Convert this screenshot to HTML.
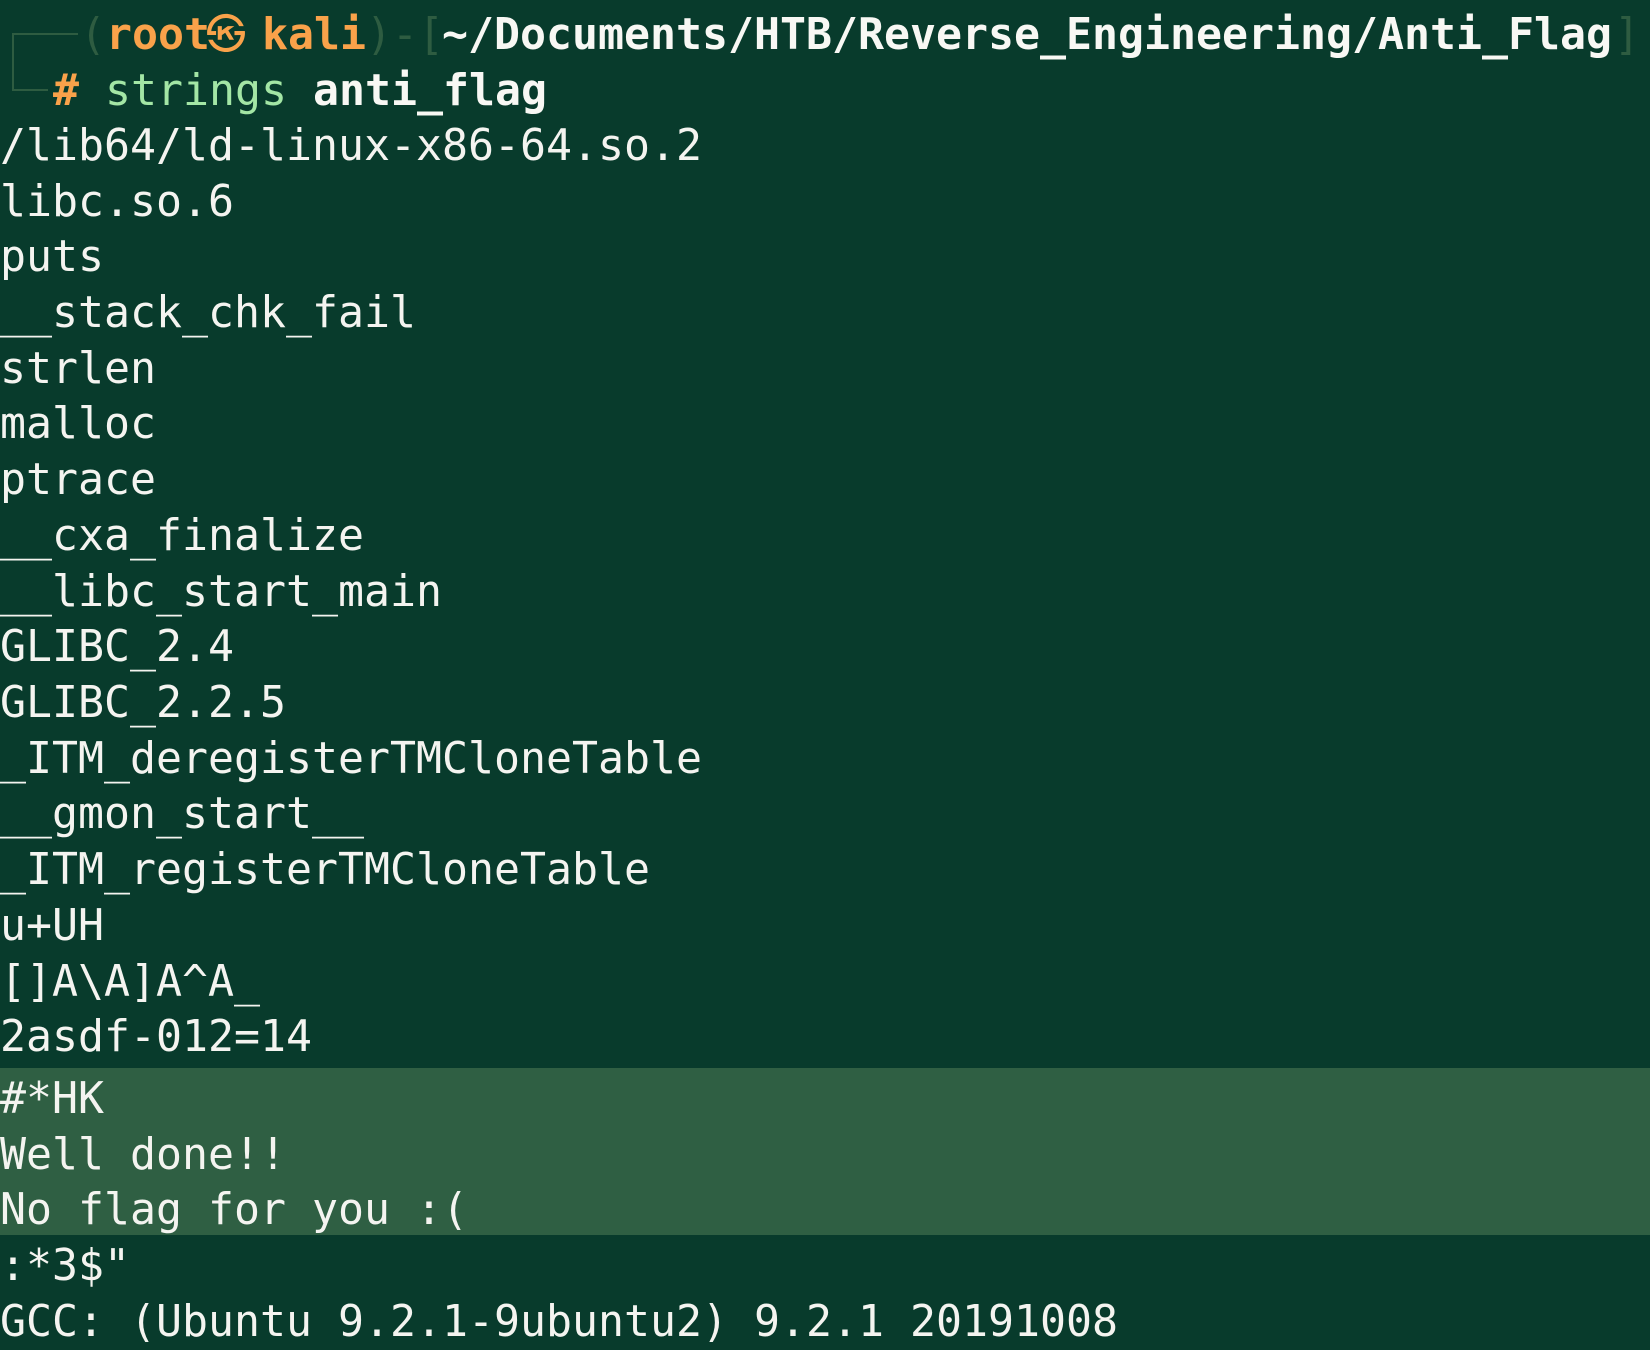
<!DOCTYPE html>
<html><head><meta charset="utf-8"><style>
html,body{margin:0;padding:0;}
body{width:1650px;height:1350px;background:#083b2c;overflow:hidden;position:relative;
font-family:"DejaVu Sans Mono","Liberation Mono",monospace;font-size:43.2px;color:#f4f4f0;}
.l{position:absolute;left:0;height:56px;line-height:56px;white-space:pre;margin-top:3px;}
.s{position:absolute;top:0;white-space:pre;}
.o{color:#f9a24a;font-weight:bold}
.d{color:#2e5c41}
.w{color:#f8f8f4;font-weight:bold}
.g{color:#a3e6a5}
.hl{position:absolute;left:0;width:1650px;top:1068px;height:167px;background:#2f5f43;}
</style></head><body>
<div class="hl"></div>
<div style="position:absolute;left:12px;top:33px;width:2px;height:58px;background:#2e5c41"></div>
<div style="position:absolute;left:12px;top:33px;width:66px;height:2px;background:#2e5c41"></div>
<div style="position:absolute;left:12px;top:89px;width:36px;height:2px;background:#2e5c41"></div>
<div class="l" style="top:4px;width:1650px">
<span class="s d" style="left:80px">(</span><span class="s o" style="left:106px">root</span><span class="s o" style="left:206px;font-weight:normal;font-size:40px">㉿</span><span class="s o" style="left:262px">kali</span><span class="s d" style="left:366px">)-[</span><span class="s w" style="left:442px">~/Documents/HTB/Reverse_Engineering/Anti_Flag</span><span class="s d" style="left:1614px">]</span>
</div>
<div class="l" style="top:60px;width:1650px">
<span class="s o" style="left:53px">#</span><span class="s g" style="left:105px">strings</span><span class="s w" style="left:313px">anti_flag</span>
</div>
<div class="l" style="top:115px">/lib64/ld-linux-x86-64.so.2</div>
<div class="l" style="top:171px">libc.so.6</div>
<div class="l" style="top:226px">puts</div>
<div class="l" style="top:282px">__stack_chk_fail</div>
<div class="l" style="top:338px">strlen</div>
<div class="l" style="top:393px">malloc</div>
<div class="l" style="top:449px">ptrace</div>
<div class="l" style="top:505px">__cxa_finalize</div>
<div class="l" style="top:561px">__libc_start_main</div>
<div class="l" style="top:616px">GLIBC_2.4</div>
<div class="l" style="top:672px">GLIBC_2.2.5</div>
<div class="l" style="top:728px">_ITM_deregisterTMCloneTable</div>
<div class="l" style="top:783px">__gmon_start__</div>
<div class="l" style="top:839px">_ITM_registerTMCloneTable</div>
<div class="l" style="top:895px">u+UH</div>
<div class="l" style="top:951px">[]A\A]A^A_</div>
<div class="l" style="top:1006px">2asdf-012=14</div>
<div class="l" style="top:1068px">#*HK</div>
<div class="l" style="top:1124px">Well done!!</div>
<div class="l" style="top:1179px">No flag for you :(</div>
<div class="l" style="top:1235px">:*3$"</div>
<div class="l" style="top:1291px">GCC: (Ubuntu 9.2.1-9ubuntu2) 9.2.1 20191008</div>
</body></html>
